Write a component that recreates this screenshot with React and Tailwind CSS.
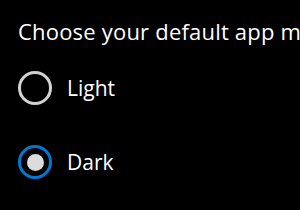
export default function App() {
  const font = { fontFamily: '"Open Sans", "Noto Sans", sans-serif' };
  return (
    <div className="w-[300px] h-[210px] bg-black overflow-hidden pl-[18px] pt-[17px] text-white" style={font}>
      <div className="text-[22px] leading-[28px] tracking-[0.2px] whitespace-nowrap">Choose your default app mode</div>
      <div className="mt-[26px] flex items-center gap-[15px]">
        <div className="w-[34px] h-[34px] rounded-full border-[3px] border-[#d2d2d2]" />
        <span className="text-[21px] leading-[28px]">Light</span>
      </div>
      <div className="mt-[40px] flex items-center gap-[15px]">
        <div className="w-[34px] h-[34px] rounded-full border-[3px] border-[#0078d7] flex items-center justify-center">
          <div className="w-[17px] h-[17px] rounded-full bg-[#dcdcdc]" />
        </div>
        <span className="text-[21px] leading-[28px]">Dark</span>
      </div>
    </div>
  );
}
